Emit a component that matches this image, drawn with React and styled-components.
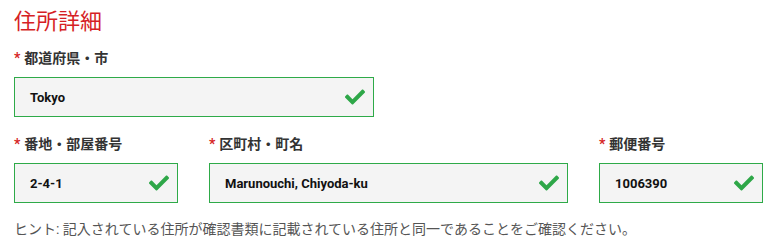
import React from "react"
import styled, { createGlobalStyle } from "styled-components"
import { FaCheck } from "react-icons/fa"

const GlobalStyle = createGlobalStyle`
  body {
    margin: 0;
    background: #ffffff;
    font-family: Roboto, "Noto Sans CJK JP", sans-serif;
  }
`

const Page = styled.div`
  padding: 9px 12px 0 14px;
  width: 749px;
`

const Title = styled.h2`
  margin: 0 0 14px;
  font-family: Roboto, "Noto Sans CJK JP", sans-serif;
  font-weight: 400;
  font-size: 22px;
  line-height: 26px;
  color: #d61f26;
`

const Row = styled.div`
  display: grid;
  grid-template-columns: ${({ columns }) => columns};
  column-gap: 31px;
  margin-bottom: 18px;
`

const Field = styled.div`
  display: flex;
  flex-direction: column;
`

const Label = styled.label`
  display: block;
  font-size: 14px;
  line-height: 18px;
  font-weight: 700;
  color: #333333;
  margin-bottom: 10px;
`

const Star = styled.span`
  color: #d61f26;
  margin-right: 4px;
`

const InputBox = styled.div`
  display: flex;
  align-items: center;
  justify-content: space-between;
  height: 40px;
  box-sizing: border-box;
  border: 1px solid #2eaa48;
  background: #f4f4f4;
  padding: 0 8px 0 15px;
`

const Value = styled.span`
  font-family: Roboto, sans-serif;
  font-size: 13px;
  font-weight: 700;
  color: #111111;
`

const Check = styled(FaCheck)`
  color: #2ea748;
  width: 20px;
  height: 20px;
`

const Hint = styled.p`
  margin: -2px 0 0;
  font-size: 14px;
  line-height: 20px;
  color: #555555;
`

const AddressField = ({ label, value }) => (
  <Field>
    <Label>
      <Star>*</Star>
      {label}
    </Label>
    <InputBox>
      <Value>{value}</Value>
      <Check />
    </InputBox>
  </Field>
)

const App = () => (
  <>
    <GlobalStyle />
    <Page>
      <Title>住所詳細</Title>
      <Row columns="360px">
        <AddressField label="都道府県・市" value="Tokyo" />
      </Row>
      <Row columns="164px 359px 164px">
        <AddressField label="番地・部屋番号" value="2-4-1" />
        <AddressField label="区町村・町名" value="Marunouchi, Chiyoda-ku" />
        <AddressField label="郵便番号" value="1006390" />
      </Row>
      <Hint>
        ヒント: 記入されている住所が確認書類に記載されている住所と同一であることをご確認ください。
      </Hint>
    </Page>
  </>
)

export default App
